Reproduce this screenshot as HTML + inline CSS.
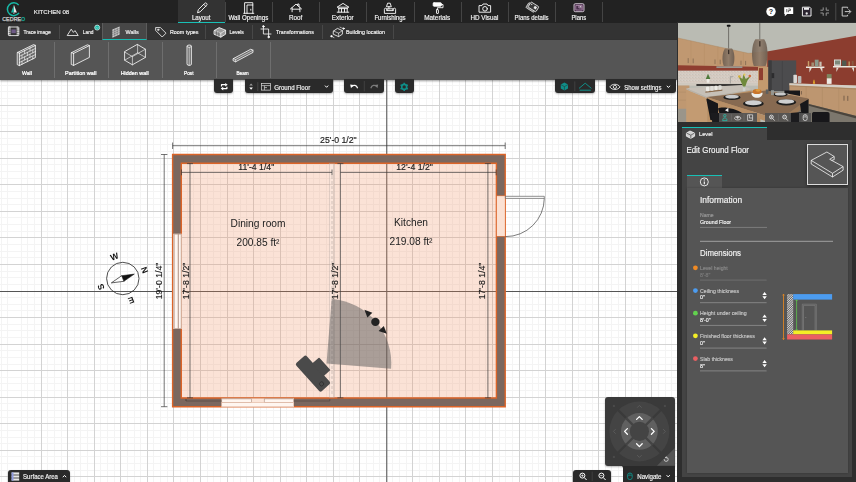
<!DOCTYPE html>
<html lang="en">
<head>
<meta charset="utf-8">
<title>Cedreo - KITCHEN 08</title>
<style>
*{box-sizing:border-box;margin:0;padding:0}
html,body{width:856px;height:482px;overflow:hidden;background:#fff}
body{font-family:"Liberation Sans",sans-serif;color:#fff;position:relative}
#canvas,#txt{position:absolute;left:0;top:0;width:856px;height:482px}
#txt{pointer-events:none;will-change:transform}
#canvas{will-change:transform}
.a{position:absolute}
.t{position:absolute;white-space:nowrap;line-height:1;display:block;-webkit-text-stroke:0.22px currentColor}
#topbar{position:absolute;left:0;top:0;width:856px;height:23px;background:#222}
#bar2{position:absolute;left:0;top:23px;width:677px;height:17px;background:#333}
#bar3{position:absolute;left:0;top:40px;width:677px;height:39.5px;background:#555;box-shadow:0 1px 2px rgba(0,0,0,.4)}
.sep{position:absolute;width:1px}
.fb{position:absolute;background:#2a2a2a;box-shadow:0 1px 2px rgba(0,0,0,.3)}
svg.i{position:absolute;overflow:visible}
#right{position:absolute;left:677.3px;top:22px;width:178.7px;height:460px;background:#2e2e2e}

</style>
</head>
<body>
<svg id="canvas" width="856" height="482" viewBox="0 0 856 482">
<rect width="856" height="482" fill="#fff"/>
<path d="M1.5 79V482M7.5 79V482M21.5 79V482M27.5 79V482M34.5 79V482M47.5 79V482M54.5 79V482M61.5 79V482M74.5 79V482M80.5 79V482M87.5 79V482M100.5 79V482M107.5 79V482M114.5 79V482M127.5 79V482M134.5 79V482M140.5 79V482M153.5 79V482M160.5 79V482M167.5 79V482M180.5 79V482M187.5 79V482M193.5 79V482M207.5 79V482M213.5 79V482M220.5 79V482M233.5 79V482M240.5 79V482M246.5 79V482M260.5 79V482M266.5 79V482M273.5 79V482M286.5 79V482M293.5 79V482M300.5 79V482M313.5 79V482M319.5 79V482M326.5 79V482M339.5 79V482M346.5 79V482M353.5 79V482M366.5 79V482M373.5 79V482M379.5 79V482M392.5 79V482M399.5 79V482M406.5 79V482M419.5 79V482M426.5 79V482M432.5 79V482M446.5 79V482M452.5 79V482M459.5 79V482M472.5 79V482M479.5 79V482M485.5 79V482M499.5 79V482M505.5 79V482M512.5 79V482M525.5 79V482M532.5 79V482M538.5 79V482M552.5 79V482M558.5 79V482M565.5 79V482M578.5 79V482M585.5 79V482M592.5 79V482M605.5 79V482M611.5 79V482M618.5 79V482M631.5 79V482M638.5 79V482M645.5 79V482M658.5 79V482M665.5 79V482M671.5 79V482M0 85.5H678M0 91.5H678M0 98.5H678M0 111.5H678M0 118.5H678M0 125.5H678M0 138.5H678M0 144.5H678M0 151.5H678M0 164.5H678M0 171.5H678M0 178.5H678M0 191.5H678M0 198.5H678M0 204.5H678M0 217.5H678M0 224.5H678M0 231.5H678M0 244.5H678M0 251.5H678M0 257.5H678M0 271.5H678M0 277.5H678M0 284.5H678M0 297.5H678M0 304.5H678M0 310.5H678M0 324.5H678M0 330.5H678M0 337.5H678M0 350.5H678M0 357.5H678M0 364.5H678M0 377.5H678M0 383.5H678M0 390.5H678M0 403.5H678M0 410.5H678M0 417.5H678M0 430.5H678M0 437.5H678M0 443.5H678M0 456.5H678M0 463.5H678M0 470.5H678" stroke="#f4f4f4" stroke-width="1" fill="none"/>
<path d="M41.5 79V482M67.5 79V482M94.5 79V482M120.5 79V482M147.5 79V482M173.5 79V482M200.5 79V482M227.5 79V482M253.5 79V482M280.5 79V482M306.5 79V482M333.5 79V482M359.5 79V482M386.5 79V482M412.5 79V482M439.5 79V482M465.5 79V482M492.5 79V482M519.5 79V482M545.5 79V482M572.5 79V482M598.5 79V482M625.5 79V482M651.5 79V482M0 105.5H678M0 131.5H678M0 158.5H678M0 184.5H678M0 211.5H678M0 237.5H678M0 264.5H678M0 291.5H678M0 317.5H678M0 344.5H678M0 370.5H678M0 397.5H678M0 423.5H678M0 450.5H678M0 476.5H678" stroke="#d3d3d3" stroke-width="1" fill="none"/>
<g id="plan" font-family="'Liberation Sans',sans-serif">
<!-- axes -->
<path d="M386.8 79V482M0 291.5H677" stroke="#555" stroke-width="1" fill="none"/>
<!-- room fill -->
<rect x="181.3" y="163.2" width="315.1" height="234.8" fill="#f08a5a" fill-opacity="0.25"/>
<!-- walls -->
<path fill-rule="evenodd" fill="#7b675e" stroke="#dc6428" stroke-width="1.4" d="M172.6 154.5H505.2V406.7H172.6ZM181.3 163.2V398H496.4V163.2Z"/>
<!-- hidden wall -->
<rect x="329.6" y="163.6" width="4.8" height="234" fill="#fff" fill-opacity="0.15" stroke="#b0a29c" stroke-width="0.35"/>
<path d="M332 176V396" stroke="#a59a95" stroke-width="0.5" stroke-dasharray="3 2" fill="none"/>
<!-- left window -->
<rect x="173.3" y="233.7" width="8.4" height="95.3" fill="#fbe6da"/>
<path d="M174.3 234.2H178.3V328.5H174.3ZM178.3 234.2H181.2V328.5H178.3Z" fill="#fff6f0" stroke="#9b7b6a" stroke-width="0.5"/>
<!-- right door -->
<rect x="496.6" y="195.8" width="8.6" height="40.5" fill="#fbe1d3" stroke="#dc6428" stroke-width="0.6"/>
<path d="M505.4 196.3H544.3V198.4H505.4Z" fill="#fff" stroke="#444" stroke-width="0.6"/>
<path d="M544.3 198.4A38.6 38.6 0 0 1 505.4 236.6" fill="none" stroke="#444" stroke-width="0.7"/>
<!-- bottom window -->
<rect x="221.5" y="398.4" width="72.5" height="8.8" fill="#fbe6da"/>
<rect x="221.8" y="398.9" width="29.6" height="3.6" fill="#fff6f0" stroke="#9b7b6a" stroke-width="0.5"/>
<rect x="264.2" y="398.9" width="29.4" height="3.6" fill="#fff6f0" stroke="#9b7b6a" stroke-width="0.5"/>
<rect x="221.8" y="402.5" width="71.9" height="4.3" fill="#fff6f0" stroke="#d9a58c" stroke-width="0.5"/>
<path d="M186 399V401H221.5M186 401V399.5M294 401H329.8V399" stroke="#4c403b" stroke-width="0.6" fill="none"/>
<!-- dimension lines -->
<g stroke="#3a3a3a" stroke-width="0.7" fill="none">
<path d="M172.6 145.7H505.2M172.6 142.5V149M505.2 142.5V149"/>
<path d="M164.2 154.5V406.7M161 154.5H167.4M161 406.7H167.4"/>
<path d="M181.5 172.4H332M181.5 169.5V175.3M332 169.5V175.3"/>
<path d="M340.4 172.4H496.2M496.2 169.5V175.3"/>
<path d="M190 163.4V398M187 163.6H193M187 397.8H193"/>
<path d="M340.4 163.4V398M337.4 163.6H343.4M337.4 397.8H343.4"/>
<path d="M487.9 163.4V398M484.9 163.6H490.9M484.9 397.8H490.9"/>
</g>
<g fill="#1a1a1a" stroke="#1a1a1a" stroke-width="0.15" font-size="8.7" text-anchor="middle">
<text x="338.4" y="143.4">25'-0 1/2"</text>
<text x="256.3" y="170">11'-4 1/4"</text>
<text x="414.6" y="170">12'-4 1/2"</text>
<text transform="translate(162.4 281) rotate(-90)">19'-0 1/4"</text>
<text transform="translate(188.5 281) rotate(-90)">17'-8 1/2"</text>
<text transform="translate(338.3 281) rotate(-90)">17'-8 1/2"</text>
<text transform="translate(485.3 281) rotate(-90)">17'-8 1/4"</text>
</g>
<g fill="#222" font-size="10.2" text-anchor="middle">
<text x="258" y="227">Dining room</text>
<text x="258" y="246">200.85 ft²</text>
<text x="411" y="226">Kitchen</text>
<text x="411" y="245.3">219.08 ft²</text>
</g>
<!-- camera view cone -->
<path d="M326.5 363.5L331.7 298.9A64.8 64.8 0 0 1 391.1 368.7Z" fill="#5a5a5a" fill-opacity="0.5"/>
<g fill="#222">
<circle cx="375.4" cy="321.9" r="4.2"/>
<path d="M364.4 309.8L372.4 312.8L367.4 317.4Z"/>
<path d="M386.8 333.8L383.8 326L378.6 331Z"/>
</g>
<g transform="translate(313 373.6) rotate(-42)">
<rect x="-7" y="-19" width="14" height="38" rx="2" fill="#4a4a4a"/>
<rect x="6" y="-8" width="9.4" height="17" rx="0.8" fill="#4a4a4a"/>
<circle cx="-0.5" cy="13.4" r="2.1" fill="none" stroke="#2a2a2a" stroke-width="0.7"/>
</g>
<!-- compass -->
<g transform="translate(122.8 278.5)">
<circle r="16.2" fill="none" stroke="#222" stroke-width="0.8"/>
<g transform="rotate(69)">
<path d="M0 -12.3L3 0H-3Z" fill="#111" stroke="#111" stroke-width="0.5"/>
<path d="M0 12.3L3 0H-3Z" fill="#fff" stroke="#111" stroke-width="0.6"/>
<g font-size="8.5" font-weight="bold" fill="#111" text-anchor="middle">
<text x="0" y="-20.5">N</text>
<text transform="rotate(90)" x="0" y="-20.5">E</text>
<text transform="rotate(180)" x="0" y="-20.5">S</text>
<text transform="rotate(270)" x="0" y="-20.5">W</text>
</g>
</g>
</g>
</g>

</svg>
<div id="topbar">
<svg class="i" style="left:0;top:-0.5px" width="30" height="23" viewBox="0 0 30 23">
<path d="M18.7 5.14A6.4 6.4 0 1 0 19.04 12.92" fill="none" stroke="#17b8a6" stroke-width="1.5"/>
<path d="M13.9 4.8L11 12.5H13.9Z" fill="#17b8a6"/>
<path d="M13.9 4.8L16.8 12.5H13.9Z" fill="#e8e8e8"/>
<path d="M13.9 12.5V14" stroke="#ddd" stroke-width="0.8"/>
<text x="2.2" y="21.2" font-family="'Liberation Sans',sans-serif" font-size="4.9" fill="#cfcfcf" stroke="#cfcfcf" stroke-width="0.25" textLength="19" lengthAdjust="spacingAndGlyphs">CEDRE</text>
<text x="21.3" y="21.2" font-family="'Liberation Sans',sans-serif" font-size="4.9" fill="#17b8a6" stroke="#17b8a6" stroke-width="0.25">O</text>
</svg>

<div class="a" style="left:178.0px;top:0;width:47.2px;height:23px;background:#333;border-bottom:1.6px solid #18c0b6"></div>
<div class="sep" style="left:224.7px;top:1.5px;height:20.5px;background:#444"></div>
<div class="sep" style="left:271.9px;top:1.5px;height:20.5px;background:#444"></div>
<div class="sep" style="left:319.1px;top:1.5px;height:20.5px;background:#444"></div>
<div class="sep" style="left:366.3px;top:1.5px;height:20.5px;background:#444"></div>
<div class="sep" style="left:413.5px;top:1.5px;height:20.5px;background:#444"></div>
<div class="sep" style="left:460.7px;top:1.5px;height:20.5px;background:#444"></div>
<div class="sep" style="left:507.9px;top:1.5px;height:20.5px;background:#444"></div>
<div class="sep" style="left:555.1px;top:1.5px;height:20.5px;background:#444"></div>
<div class="sep" style="left:602.3px;top:1.5px;height:20.5px;background:#444"></div>
<svg class="i" style="left:193.6px;top:0.1px" width="16" height="16" viewBox="-8 -8 16 16"><g fill="none" stroke="#fff" stroke-width="0.9" stroke-linecap="round" stroke-linejoin="round"><path d="M-4.4 4.4L-3.6 1.6L2.6 -4.6A1.3 1.3 0 0 1 4.6 -2.6L-1.6 3.6Z"/><path d="M1.7 -3.7L3.7 -1.7"/></g></svg>

<svg class="i" style="left:240.8px;top:0.1px" width="16" height="16" viewBox="-8 -8 16 16"><g fill="none" stroke="#fff" stroke-width="0.9" stroke-linecap="round" stroke-linejoin="round"><path d="M-4.4 5.3V-5.3H3.8V5.3"/><path d="M-2 5.3V-3H3.8"/><path d="M-5.3 5.3H4.8"/><path d="M1.8 1.2V2.2"/></g></svg>

<svg class="i" style="left:288.0px;top:0.1px" width="16" height="16" viewBox="-8 -8 16 16"><g fill="none" stroke="#fff" stroke-width="0.9" stroke-linecap="round" stroke-linejoin="round"><path d="M-5.6 1L0 -3.9L5.6 1"/><path d="M-3.9 -0.3V3.8M3.9 -0.3V3.8M-3.9 1.2H3.9"/><path d="M1.6 -2.6V-4H3V-1.4"/></g></svg>

<svg class="i" style="left:335.2px;top:0.1px" width="16" height="16" viewBox="-8 -8 16 16"><g fill="none" stroke="#fff" stroke-width="0.9" stroke-linecap="round" stroke-linejoin="round"><path d="M-5.6 -1L0 -4.6L5.6 -1Z"/><path d="M-4.6 0.6H4.6M-5.8 4.2H5.8M-4.2 0.8V4M-1.5 0.8V4M1.5 0.8V4M4.2 0.8V4"/></g></svg>

<svg class="i" style="left:382.4px;top:0.1px" width="16" height="16" viewBox="-8 -8 16 16"><g fill="none" stroke="#fff" stroke-width="0.9" stroke-linecap="round" stroke-linejoin="round"><path d="M-5.6 5V1.4A1.2 1.2 0 0 1 -3.2 1.4V2.6H3.2V1.4A1.2 1.2 0 0 1 5.6 1.4V5Z"/><path d="M-3.4 -1.6L-2.4 -4.8H0.2L1.2 -1.6ZM-1.1 -1.6V1"/><path d="M-3 2.6V0.8H3V2.6"/></g></svg>

<svg class="i" style="left:429.6px;top:0.1px" width="16" height="16" viewBox="-8 -8 16 16"><g fill="none" stroke="#fff" stroke-width="0.9" stroke-linecap="round" stroke-linejoin="round"><rect x="-4.8" y="-5.2" width="8.2" height="3.4" rx="0.8" fill="#fff"/><path d="M3.4 -3.5H5V-0.3H-0.6V1.6"/><rect x="-1.5" y="1.6" width="1.9" height="3.9" rx="0.5"/></g></svg>

<svg class="i" style="left:476.8px;top:0.1px" width="16" height="16" viewBox="-8 -8 16 16"><g fill="none" stroke="#fff" stroke-width="0.9" stroke-linecap="round" stroke-linejoin="round"><path d="M-5.6 -2.4H-3L-2 -4H2L3 -2.4H5.6V4.2H-5.6Z"/><circle cx="0" cy="0.8" r="2.3"/></g></svg>

<svg class="i" style="left:524.0px;top:0.1px" width="16" height="16" viewBox="-8 -8 16 16"><g transform="translate(0 -0.6) rotate(32)"><rect x="-5.2" y="-2.6" width="9.2" height="6" rx="0.8" fill="#777" stroke="#cfcfcf" stroke-width="0.8"/><rect x="-3.6" y="-4.2" width="9.2" height="6" rx="0.8" fill="#3a3a3a" stroke="#e6e6e6" stroke-width="0.8"/><path d="M1.6 -2.8H4.2V-0.2H1.6Z" fill="#eee"/><circle cx="-1.8" cy="-2.4" r="0.6" fill="#eee"/></g></svg>

<svg class="i" style="left:571.2px;top:0.1px" width="16" height="16" viewBox="-8 -8 16 16"><g transform="translate(0 -0.3)"><rect x="-5" y="-4" width="10" height="8" rx="1.2" fill="#47304a" stroke="#d9cdd9" stroke-width="0.9"/><path d="M-3.2 -2.2H3.2V2.3H-3.2ZM-0.2 -2.2V0.3H3.2" fill="none" stroke="#d4a6cf" stroke-width="0.6"/><path d="M0.6 -1.4H2.4V-0.4H0.6Z" fill="#fff"/></g></svg>

<svg class="i" style="left:760px;top:0" width="96" height="23" viewBox="760 0 96 23">
<circle cx="771" cy="11.6" r="4.7" fill="#fff"/>
<text x="771" y="14.1" font-family="'Liberation Sans',sans-serif" font-size="7.2" font-weight="bold" fill="#222" text-anchor="middle">?</text>
<path d="M784.2 7.2H793.2V14H787.2L784.8 16.2V14H784.2Z" fill="#fff"/>
<path d="M786.8 9V12.2M788.4 9H790.4V10.6H788.4V12.2" stroke="#222" stroke-width="0.7" fill="none"/>
<path d="M802.4 7.2H809.8L811 8.4V16H802.4Z" fill="#2b2430" stroke="#eee" stroke-width="1"/>
<path d="M804 7.6H809V9.8H804Z" fill="#eee"/><circle cx="806.7" cy="13.5" r="1.15" fill="#eee"/>
<path d="M820.4 10.2H823.2V7.4M829 10.2H826.2V7.4M820.4 13H823.2V15.8M829 13H826.2V15.8" fill="none" stroke="#959595" stroke-width="1"/>
<path d="M835.8 3V20.5" stroke="#555" stroke-width="0.8"/>
<path d="M847.6 8.4V7.2H842.2V16H847.6V14.8" fill="none" stroke="#c8c8c8" stroke-width="1"/>
<path d="M844.8 11.6H850.6M848.6 9.4L850.8 11.6L848.6 13.8" fill="none" stroke="#c8c8c8" stroke-width="1"/>
</svg>
</div>
<div id="bar2">
<div class="a" style="left:102.3px;top:0;width:44.9px;height:17px;background:#474747;border-left:0.8px solid #5c5c5c;border-right:0.8px solid #5c5c5c;border-bottom:1.2px solid #18c0b6"></div>
<div class="sep" style="left:58.8px;top:1.5px;height:14.5px;background:#484848"></div>
<div class="sep" style="left:205.2px;top:1.5px;height:14.5px;background:#484848"></div>
<div class="sep" style="left:252px;top:1.5px;height:14.5px;background:#484848"></div>
<div class="sep" style="left:322px;top:1.5px;height:14.5px;background:#484848"></div>
<div class="sep" style="left:392.5px;top:1.5px;height:14.5px;background:#484848"></div>
<svg class="i" style="left:0;top:0" width="677" height="17" viewBox="0 23 677 17">
<g fill="none" stroke="#fff" stroke-width="0.8" stroke-linejoin="round" stroke-linecap="round">
<rect x="8.4" y="27" width="10.4" height="8.6" rx="0.6"/><path d="M10 27V35.6M17.2 27V35.6M8.4 29H10M8.4 31.3H10M8.4 33.6H10M17.2 29H18.8M17.2 31.3H18.8M17.2 33.6H18.8" stroke-width="0.6"/>
<path d="M11.4 29.4H15.8V33.2H11.4Z" fill="#6e5a86" stroke="none"/>
<path d="M67.4 35.2L71.2 29.2L73.4 32.4L75 30.6L78 35.2Z"/>
<path d="M156 27.6H160.4L166 33.2L162.2 37L156 30.8Z"/><circle cx="158.2" cy="29.8" r="0.7"/>
<path d="M214.4 30.4L219.2 27.6L225.6 30.2V34.2L220.8 37.2L214.4 34.4Z" fill="#9c9c9c"/><path d="M214.4 30.4L220.8 33.2L225.6 30.2M220.8 33.2V37.2" stroke-width="0.6"/><path d="M216.6 31.4V35.4M218.8 32.4V36.4" stroke-width="0.5" stroke="#444"/>
<path d="M263.4 26.6V34H271M261 29H268.6V36.6"/><circle cx="263.4" cy="26.4" r="0.8" fill="#fff"/><circle cx="268.6" cy="37" r="0.8" fill="#fff"/>
<path d="M333.6 31L337.4 28.4L342.4 30.6V34.2L338.6 36.6L333.6 34.4Z"/><path d="M333.6 31L338.6 33.2L342.4 30.6M338.6 33.2V36.6" stroke-width="0.6"/><path d="M331.4 36.4L334 37.6M340 27.2L343.4 28.6" stroke-dasharray="1 1" stroke-width="0.6"/><circle cx="331.4" cy="36.2" r="0.7" fill="#fff"/><circle cx="343.6" cy="28.6" r="0.7" fill="#fff"/>
</g>
<g transform="translate(1 0)">
<path d="M111.4 29.6L118.6 26.4V34.6L111.4 37.8Z" fill="#cfcfcf"/>
<path d="M111.4 31.6L118.6 28.4M111.4 33.6L118.6 30.4M111.4 35.6L118.6 32.4M113.8 28.6V36.8M116.2 27.6V35.6" stroke="#555" stroke-width="0.5" fill="none"/>
</g>
<circle cx="97.2" cy="27.6" r="2.5" fill="#17b8a6" stroke="#e8f6f4" stroke-width="0.7"/>
<path d="M96 27.2L97.2 28.4L98.4 27.2" stroke="#fff" stroke-width="0.5" fill="none"/>
</svg>







</div>
<div id="bar3">
<div class="sep" style="left:53.5px;top:1.5px;height:36.5px;background:#6e6e6e"></div>
<div class="sep" style="left:107.5px;top:1.5px;height:36.5px;background:#6e6e6e"></div>
<div class="sep" style="left:161.5px;top:1.5px;height:36.5px;background:#6e6e6e"></div>
<div class="sep" style="left:215.5px;top:1.5px;height:36.5px;background:#6e6e6e"></div>
<div class="sep" style="left:269.5px;top:1.5px;height:36.5px;background:#6e6e6e"></div>
<svg class="i" style="left:0;top:0" width="280" height="40" viewBox="0 40 280 40">
<g fill="none" stroke="#fff" stroke-width="0.8" stroke-linejoin="round" stroke-linecap="round">
<!-- wall (bricks) -->
<path d="M17.6 52.4L33.6 44.6L35.4 45.4V57.6L19.4 65.6L17.6 64.8Z" fill="#6a6a6a"/>
<path d="M19.4 53.2L35.4 45.4M19.4 53.2V65.6M17.6 52.4L19.4 53.2"/>
<path d="M19.4 56.3L35.4 48.4M19.4 59.4L35.4 51.5M19.4 62.5L35.4 54.6M24.6 50.6V53.7M30 48V51.1M22 55V58.1M27.4 52.4V55.5M32.8 49.8V52.9M24.6 56.8V59.9M30 54.2V57.3M22 61.2V64.3M27.4 58.6V61.7M32.8 56V59.1" stroke-width="0.6"/>
<!-- partition wall -->
<path d="M71.6 52.6L87.4 44.8L89.4 45.6V57.4L73.6 65.4L71.6 64.6Z" fill="#5e5e5e"/>
<path d="M73.6 53.4L89.4 45.6M73.6 53.4V65.4M71.6 52.6L73.6 53.4"/>
<!-- hidden wall -->
<path d="M137.6 44.6L145.4 49.2V57.4L132.4 64.8L124.6 60.2V52Z"/>
<path d="M124.6 52L132.4 56.6L145.4 49.2M132.4 56.6V64.8M137.6 44.6V52.8L124.6 60.2M137.6 52.8L145.4 57.4" stroke-width="0.6"/>
<!-- post -->
<path d="M187 46.2A2.2 1.2 0 0 1 191.4 46.2V64.2A2.2 1.2 0 0 1 187 64.2Z" fill="#6a6a6a"/>
<path d="M187 46.2A2.2 1.2 0 0 0 191.4 46.2M189.2 47.4V65.2" stroke-width="0.6"/>
<!-- beam -->
<path d="M233.4 58.6L250.8 49.2L253 50.2V52.4L235.6 61.8L233.4 60.8Z" fill="#6a6a6a"/>
<path d="M233.4 58.6L235.6 59.6L253 50.2M235.6 59.6V61.8" stroke-width="0.6"/>
</g>
</svg>





</div>
<div class="fb" style="left:214.3px;top:79px;width:18.8px;height:13.5px;border-radius:0 0 3px 3px;"></div>
<div class="fb" style="left:244.6px;top:79px;width:88.4px;height:13.5px;border-radius:0 0 3px 3px;"></div>
<div class="fb" style="left:344.3px;top:79px;width:39.4px;height:13.5px;border-radius:0 0 3px 3px;"></div>
<div class="fb" style="left:395px;top:79px;width:19px;height:13.5px;border-radius:0 0 3px 3px;"></div>
<div class="fb" style="left:555px;top:79px;width:40px;height:13.5px;border-radius:0 0 3px 3px;"></div>
<div class="fb" style="left:606px;top:79px;width:70px;height:13.5px;border-radius:0 0 3px 3px;"></div>
<svg class="i" style="left:200px;top:76px" width="480" height="20" viewBox="200 76 480 20">
<g fill="none" stroke="#fff" stroke-width="1.2" stroke-linejoin="round">
<path d="M221.5 86.4V84.7H225.6M226.9 86.8V88.6H222.8"/>
</g>
<path d="M225.2 82.9L227.7 84.7L225.2 86.5ZM223.2 86.8L220.7 88.6L223.2 90.4Z" fill="#fff"/>
<path d="M249.3 85.5L251.1 83.4L252.9 85.5Z" fill="#9a9a9a"/><path d="M249.3 87.6L251.1 89.8L252.9 87.6Z" fill="#fff"/>
<path d="M257.8 82.2V91" stroke="#555" stroke-width="0.7"/>
<g fill="none" stroke="#ddd" stroke-width="0.7"><rect x="261.5" y="83.5" width="9" height="6.6"/><path d="M261.5 85.6H270.5M264.4 85.6V90.1M264.4 87.6H267"/></g>
<path d="M325 85.6L326.6 87.3L328.2 85.6" fill="none" stroke="#fff" stroke-width="1"/>
<!-- undo / redo -->
<path d="M364.3 81V91.4" stroke="#4a4a4a" stroke-width="0.7"/>
<path d="M351.6 86.6C353.6 84.6 356.6 85 357.6 88.2" fill="none" stroke="#fff" stroke-width="1.2"/>
<path d="M350.2 84.6L353.6 85L351 88.2Z" fill="#fff"/>
<path d="M376.8 86.6C374.8 84.6 371.8 85 370.8 88.2" fill="none" stroke="#7d7d7d" stroke-width="1.2"/>
<path d="M378.2 84.6L374.8 85L377.4 88.2Z" fill="#7d7d7d"/>
<!-- gear -->
<g transform="translate(404.2 86.9)">
<circle r="2.5" fill="none" stroke="#0f8e88" stroke-width="1.6"/>
<g stroke="#0f8e88" stroke-width="1.5"><path d="M0 -4.2V-2.6M0 4.2V2.6M-3.64 -2.1L-2.25 -1.3M3.64 2.1L2.25 1.3M-3.64 2.1L-2.25 1.3M3.64 -2.1L2.25 -1.3"/></g>
</g>
<!-- layers buttons -->
<path d="M560.8 84.6L564.4 82.6L568 84.6V88.6L564.4 90.6L560.8 88.6Z" fill="#0f8e88"/>
<path d="M560.8 84.6L564.4 86.6L568 84.6M564.4 86.6V90.6" stroke="#2a2a2a" stroke-width="0.5" fill="none"/>
<path d="M574.8 81.4V91.2" stroke="#4a4a4a" stroke-width="0.7"/>
<path d="M579 88.4L585.2 83.2L591.4 88.4M579.6 90.2H590.8" fill="none" stroke="#0f8e88" stroke-width="1"/>
<!-- eye -->
<path d="M609.8 86.9C612 83.4 617.8 83.4 620 86.9C617.8 90.4 612 90.4 609.8 86.9Z" fill="none" stroke="#fff" stroke-width="0.8"/>
<circle cx="614.9" cy="86.9" r="1.6" fill="none" stroke="#fff" stroke-width="0.8"/>
<path d="M666.8 85.8L668.4 87.5L670 85.8" fill="none" stroke="#fff" stroke-width="1"/>
</svg>


<div class="fb" style="left:8.1px;top:469.5px;width:62.4px;height:13px;border-radius:3px 3px 0 0;"></div>
<svg class="i" style="left:8px;top:468px" width="64" height="14" viewBox="8 468 64 14">
<g fill="#e6e6e6"><rect x="11.6" y="472.4" width="7.6" height="2.2"/><rect x="11.6" y="475.4" width="7.6" height="2.2"/><rect x="11.6" y="478.4" width="7.6" height="2.2"/></g>
<rect x="11.6" y="472.4" width="1.9" height="8.2" fill="#8f9be0"/>
<path d="M62.8 477.2L64.5 475.4L66.2 477.2" fill="none" stroke="#fff" stroke-width="1"/>
</svg>

<div class="fb" style="left:605px;top:396.5px;width:69.8px;height:69.3px;border-radius:3px 3px 0 3px;background:#3a3a3a;"></div>
<div class="fb" style="left:623px;top:465.6px;width:51.8px;height:16.4px;border-radius:0;box-shadow:none;"></div>
<div class="fb" style="left:573px;top:469.9px;width:38.4px;height:12.1px;border-radius:3px 3px 0 0;"></div>
<svg class="i" style="left:570px;top:394px" width="108" height="88" viewBox="570 394 108 88">
<path d="M620 465.6H623V468.6A3 3 0 0 0 620 465.6Z" fill="#2a2a2a"/>
<g transform="translate(639.4 431.4)">
<circle r="30" fill="#444"/>
<path d="M-21.5 -21.5L-7 -7M21.5 -21.5L7 -7M-21.5 21.5L-7 7M21.5 21.5L7 7" stroke="#3a3a3a" stroke-width="2.2"/>
<circle r="18.4" fill="#606060"/>
<path d="M-13.6 -13.6L13.6 13.6M13.6 -13.6L-13.6 13.6" stroke="#444" stroke-width="2.4"/>
<circle r="9.6" fill="#444"/>
<g fill="none" stroke="#fff" stroke-width="1.3" stroke-linecap="round" stroke-linejoin="round">
<path d="M-2.8 -12L0 -14.8L2.8 -12M-2.8 12.4L0 15.2L2.8 12.4M-12 -2.8L-14.8 0L-12 2.8M12 -2.8L14.8 0L12 2.8"/>
</g>
<g fill="none" stroke="#595959" stroke-width="1" stroke-linecap="round">
<path d="M-2 -24L0 -26L2 -24M-2 24L0 26L2 24M-24 -2L-26 0L-24 2M24 -2L26 0L24 2"/>
</g>
<g fill="#4a4a4a"><circle cx="-25.5" cy="-25.5" r="1.2"/><circle cx="-25.5" cy="25.5" r="1.2"/><circle cx="25.5" cy="-25.5" r="1.2"/></g>
</g>
<path d="M674.8 448V465.8H657Z" fill="#555"/>
<path d="M664.2 459.2A2 2 0 1 0 666.4 457.4" fill="none" stroke="#ddd" stroke-width="0.8"/>
<path d="M666.6 456.2V458.6L664.8 457.4Z" fill="#ddd"/>
<!-- zoom buttons -->
<g fill="none" stroke="#fff" stroke-width="1"><circle cx="582.4" cy="475.6" r="2.5"/><path d="M584.3 477.6L586.6 480"/><circle cx="601.4" cy="475.6" r="2.5"/><path d="M603.3 477.6L605.6 480"/></g>
<path d="M581.2 475.6H583.6M582.4 474.4V476.8M600.2 475.6H602.6" stroke="#fff" stroke-width="0.7"/>
<path d="M592.2 471.6V481" stroke="#4a4a4a" stroke-width="0.7"/>
<!-- navigate -->
<rect x="627.6" y="473" width="4.6" height="6.6" rx="2.2" fill="none" stroke="#0f8e88" stroke-width="0.9"/>
<path d="M627.6 475.4H632.2M629.9 473V475.4" stroke="#0f8e88" stroke-width="0.6"/>
<path d="M666.6 475.2L668.2 476.9L669.8 475.2" fill="none" stroke="#fff" stroke-width="1"/>
</svg>

<div id="right"></div>
<svg class="i" style="left:677.6px;top:22.9px" width="178.4" height="98.9" viewBox="677.6 22.9 178.4 98.9" preserveAspectRatio="none">
<defs>
<linearGradient id="lampg" x1="0" x2="1" y1="0" y2="0"><stop offset="0" stop-color="#6e5e50"/><stop offset="0.5" stop-color="#8d7a69"/><stop offset="1" stop-color="#6a5b4f"/></linearGradient>
<pattern id="terr" width="3" height="3" patternUnits="userSpaceOnUse"><rect width="3" height="3" fill="#dcd5cc"/><rect x="0.4" y="0.5" width="0.9" height="0.8" fill="#8b6a58"/><rect x="1.8" y="1.8" width="0.8" height="0.8" fill="#5f5a55"/><rect x="2" y="0.2" width="0.6" height="0.6" fill="#b9a089"/></pattern>
<clipPath id="pv"><rect x="677.6" y="22.9" width="178.4" height="98.9"/></clipPath>
</defs>
<g clip-path="url(#pv)">
<!-- ceiling -->
<rect x="677" y="22" width="180" height="100" fill="#babbb3"/>
<!-- red side wall -->
<path d="M766.6 51.4L856 35.6V90H766.6Z" fill="#8c3d2f"/>
<!-- back wall / upper cabinets -->
<path d="M677 37.8L748 53.2L766.8 51.4V67H677Z" fill="#c09871"/>
<path d="M677 37.8L748 53.2L766.8 51.4" fill="none" stroke="#a88561" stroke-width="0.4"/>
<path d="M690.6 40.8V65.4M704 43.8V65.6M717.4 46.6V65.8M730.4 49.4V66M743 52.2V66.4M755 52.4V66.6" stroke="#b18a60" stroke-width="0.35"/>
<path d="M687.8 58V63M692.8 58.4V63.2M714.6 59.4V64M719.8 59.6V64.2M740.6 60.6V64.8M745.2 60.8V65" stroke="#5b4a3c" stroke-width="0.5"/>
<!-- red strip under cabinets -->
<path d="M677 65.1L766.6 66.8V71H677Z" fill="#8f3e30"/>
<rect x="758.4" y="66.8" width="8.4" height="14" fill="#8f3e30"/>
<!-- backsplash -->
<rect x="677" y="70.6" width="81.4" height="12.8" fill="url(#terr)"/>
<rect x="677" y="70.6" width="81.4" height="12.8" fill="#e2dad0" fill-opacity="0.35"/>
<!-- range hood -->
<path d="M716 66.2H742V68H716Z" fill="#9b9890"/>
<!-- back counter -->
<rect x="677" y="83" width="84" height="2.6" fill="#cfc9bf"/>
<path d="M696 83.8H742V85.8H696Z" fill="#3a3836"/>
<path d="M730 76.4V83.4M730 76.6H733" stroke="#8a8a88" stroke-width="0.6" fill="none"/>
<!-- tall cabinet next to fridge -->
<rect x="757.6" y="66.8" width="11" height="26" fill="#c39a6e"/>
<rect x="758.6" y="68" width="4" height="12" fill="#8f3e30"/>
<!-- lower back cabinets left -->
<rect x="677" y="85.4" width="12" height="24" fill="#bf9871"/>
<path d="M677 92H686M677 100H686" stroke="#a98560" stroke-width="0.4"/>
<!-- floor -->
<path d="M677 108.6H690V122.5H677Z" fill="#9a958a"/>
<path d="M790 96L856 112V122.5H780Z" fill="#7c776d"/>
<!-- fridge -->
<rect x="768" y="60.3" width="27.8" height="31" fill="#4c4c4e"/>
<rect x="768" y="60.3" width="3.4" height="31" fill="#3c3c3e"/>
<path d="M782 61V91" stroke="#3a3a3c" stroke-width="0.4"/>
<rect x="771.2" y="73" width="2.6" height="5" fill="#2c2c2e"/>
<!-- right lower cabinets -->
<path d="M789 83.2L856 85.4V116L808.4 104L789 97Z" fill="#bd9670"/>
<path d="M789 83.2L856 85.4V88.2L789 85.2Z" fill="#d4cfc6"/>
<path d="M789 85.4L856 88.4V89.4L789 86.2Z" fill="#a88560"/>
<path d="M805.8 86.4V102.6M822 87.2V107M838.4 88V111.2" stroke="#a98560" stroke-width="0.4"/>
<path d="M808.4 104L856 116V118.4L808.4 105.6Z" fill="#4a443c"/>
<path d="M843.6 95.6V100.6M847.4 95.8V100.8M801 91V94.4" stroke="#4b3d32" stroke-width="0.6"/>
<!-- items on right counter -->
<rect x="793" y="74.6" width="3.6" height="8.4" rx="0.8" fill="#d9d9d6"/><rect x="797.4" y="75.8" width="3.6" height="7.4" rx="0.8" fill="#b9b9b6"/>
<path d="M812.4 83.6L813.2 79.6H814L814.8 83.6Z" fill="#e0a52c"/>
<rect x="826.4" y="74" width="4.8" height="4.4" fill="#7f8660"/><rect x="826.4" y="78.2" width="4.8" height="5.6" fill="#ece9e2"/>
<!-- shelves -->
<path d="M805.6 66.4H824V67.9H805.6ZM832.6 65.8H856V67.3H832.6Z" fill="#ece8e0"/>
<path d="M809 67.9V72.4L811.4 67.9ZM822 67.9V72.4L819.6 67.9ZM836 67.3V72L838.4 67.3ZM853.6 67.3V72L851.2 67.3Z" fill="#ded9d0"/>
<rect x="807.4" y="61" width="1.4" height="5.4" fill="#c7a06a"/><rect x="811" y="62.4" width="2.6" height="4" fill="#a38e74"/><rect x="814.4" y="59.6" width="3.8" height="6.8" fill="#8c9a8c"/><rect x="819" y="61.6" width="2.2" height="4.8" fill="#c9c2b4"/>
<rect x="833.6" y="59.4" width="7" height="6.4" fill="#d8d8d4"/><rect x="834.6" y="60.4" width="5" height="4" fill="#7d8a7c"/><rect x="841.6" y="60.4" width="4.4" height="5.4" fill="#4f5a50"/><rect x="848" y="61.4" width="1.6" height="4.4" fill="#b7905c"/><rect x="851.4" y="60.8" width="1.8" height="5" fill="#8a5a42"/>
<!-- island -->
<path d="M685.8 89.4L706.7 98V123H685.8Z" fill="#c39b72"/>
<path d="M685.8 88.2L741.4 84.9L751.4 89.3L706.7 96.8Z" fill="#c6c0b7"/>
<path d="M685.8 88.2L706.7 96.8L751.4 89.3V90.5L706.7 98.2L685.8 89.5Z" fill="#b9b2a8"/>
<path d="M706.7 98.2L751.4 90.5V123H706.7Z" fill="#b98f64"/>
<!-- cups on island -->
<path d="M705 91.4L722 89.4V90.6L705 92.6Z" fill="#8a6a4c"/>
<rect x="705.6" y="86.6" width="3.4" height="4.6" rx="1" fill="#ecebe6"/><rect x="709.8" y="86" width="3.4" height="4.6" rx="1" fill="#e0dfda"/><rect x="714" y="85.6" width="3.2" height="4.4" rx="1" fill="#ecebe6"/><rect x="718" y="85.2" width="3.2" height="4.4" rx="1" fill="#dddcd6"/>
<!-- plant -->
<rect x="706.4" y="78.6" width="2.6" height="4" fill="#eeece6"/><path d="M705.4 78.8L707.6 73.6L710 78.8Z" fill="#4e7a3a"/>
<!-- flowers -->
<path d="M743.4 88L738 76L742 79L743 74L745.4 79L750.6 75.4L746.8 81L744.4 88Z" fill="#6f8a3c"/>
<circle cx="739" cy="76.4" r="1.3" fill="#d8b13a"/><circle cx="749.4" cy="76" r="1.3" fill="#d06a3a"/><circle cx="744" cy="74.6" r="1.1" fill="#e4c85a"/>
<rect x="742.4" y="86.4" width="2.6" height="4.6" fill="#cfd6d4" fill-opacity="0.8"/>
<!-- table -->
<path d="M706.3 96.9L765.9 90.4L808.2 98.3L779 119.8Z" fill="#876a51"/>
<path d="M706.3 96.9L779 119.8V123H771L706.3 100.4Z" fill="#b68e66"/>
<path d="M779 119.8L808.2 98.3V102L786 123H779Z" fill="#9d7a58"/>
<path d="M717 104.4L760 118.4V123H717Z" fill="#b38b62"/>
<!-- plates -->
<g>
<ellipse cx="731.6" cy="97.3" rx="8.6" ry="2.6" fill="#1f1f1f"/><ellipse cx="731.6" cy="96.6" rx="6.8" ry="1.9" fill="#c9cacb"/>
<ellipse cx="753" cy="103.6" rx="10.4" ry="3.3" fill="#1f1f1f"/><ellipse cx="753" cy="102.7" rx="8.4" ry="2.5" fill="#cfd0d1"/>
<ellipse cx="780" cy="94.5" rx="7.2" ry="2.1" fill="#1f1f1f"/><ellipse cx="780" cy="93.9" rx="5.6" ry="1.5" fill="#c9cacb"/>
<ellipse cx="785.8" cy="102.2" rx="10" ry="3.1" fill="#1f1f1f"/><ellipse cx="785.8" cy="101.4" rx="8" ry="2.3" fill="#cfd0d1"/>
</g>
<!-- bowl -->
<path d="M751 92.6H762.2C762.2 96 760 97.6 756.6 97.6C753.2 97.6 751 96 751 92.6Z" fill="#eeeeea"/>
<ellipse cx="756.6" cy="91.4" rx="4.6" ry="2.6" fill="#c9762c"/>
<ellipse cx="757.6" cy="90.2" rx="2.4" ry="1.4" fill="#e09a3c"/>
<!-- glasses -->
<rect x="765.4" y="89.4" width="2.6" height="4.4" fill="#5d5f5e"/><rect x="770.6" y="90" width="3" height="5" fill="#9aa09e" fill-opacity="0.8"/>
<!-- chairs -->
<path d="M706 99.4C706 98.4 707 98.2 708 98.8L717.6 103.4V120H710Z" fill="#17171a"/>
<path d="M717.6 108.4C722 106 736 108.6 742.4 113.4H719Z" fill="#17171a"/>
<path d="M710 113H722V123H712Z" fill="#1b1b1e"/>
<path d="M784 90.4H799.6V95.8L792 94.4L784 93Z" fill="#17171a"/>
<path d="M799.6 104L808.2 99V113.6L801 114Z" fill="#17171a"/>
<path d="M790 113L801 112V123H788Z" fill="#1b1b1e"/>
<path d="M811.6 113.6C811.6 112.6 812.6 112 814 112H827C828.4 112 829.2 112.8 829.2 114V123H811.6Z" fill="#17171a"/>
<path d="M724.6 110.2L728 107.6V112Z" fill="#f1f1f1"/>
<!-- pendant lamps -->
<path d="M728.2 26.6V48.6M759.4 23V39.6" stroke="#26221f" stroke-width="0.5"/>
<rect x="726.4" y="24.6" width="3.8" height="2.1" rx="0.8" fill="#111"/>
<path d="M724.6 48.4H731.6C734.4 52 734.8 61 732.6 65.8H723.4C721.2 61 721.8 52 724.6 48.4Z" fill="url(#lampg)" fill-opacity="0.93"/>
<path d="M755 39.2H763.8C767.6 44 768.2 58 765.2 65.8H753.4C750.4 58 751.2 44 755 39.2Z" fill="url(#lampg)" fill-opacity="0.9"/>
<rect x="727.6" y="49.6" width="1.3" height="4.4" fill="#3a2f28"/><rect x="758.8" y="41" width="1.3" height="5.4" fill="#3a2f28"/>
</g>
</svg>
<div class="a" style="left:718.6px;top:113.3px;width:38.4px;height:8.5px;background:rgba(82,82,82,.92)"></div>
<div class="a" style="left:765.3px;top:113.3px;width:26.2px;height:8.5px;background:rgba(82,82,82,.92)"></div>
<div class="a" style="left:799px;top:113.3px;width:12.4px;height:8.5px;background:rgba(82,82,82,.92)"></div>
<svg class="i" style="left:715px;top:112px" width="100" height="11" viewBox="715 112 100 11">
<g fill="none" stroke-width="0.7">
<circle cx="724.8" cy="115.6" r="1.2" stroke="#1fc4b0"/><path d="M722.6 120.6C722.6 117 727 117 727 120.6Z" stroke="#1fc4b0"/>
<path d="M731.4 114.2V120.8M744 114.2V120.8M778.4 114.2V120.8" stroke="#777" stroke-width="0.5"/>
<path d="M734.6 118.4C734.6 115.6 740.8 115.6 740.8 118.4C740.8 120.4 734.6 120.4 734.6 118.4ZM736 117.4H739.4M737.7 116V119" stroke="#e6e6e6"/>
<path d="M747.6 114.8H752.6V120.4H747.6ZM749.4 114.8V118H752.6" stroke="#e6e6e6"/>
<circle cx="771.4" cy="117" r="1.9" stroke="#fff"/><path d="M772.8 118.6L774.6 120.6" stroke="#fff"/><path d="M770.4 117H772.4M771.4 116V118" stroke="#fff" stroke-width="0.5"/>
<circle cx="784.6" cy="117" r="1.9" stroke="#fff"/><path d="M786 118.6L787.8 120.6" stroke="#fff"/><path d="M783.6 117H785.6" stroke="#fff" stroke-width="0.5"/>
<rect x="803.2" y="114.6" width="4" height="6" rx="2" stroke="#e6e6e6"/><path d="M803.2 117H807.2M805.2 114.6V117" stroke="#e6e6e6" stroke-width="0.5"/>
</g>
</svg>
<div class="a" style="left:682px;top:127.2px;width:85px;height:13.3px;background:#444;border-top:1.3px solid #18c0b6"></div>
<div class="a" style="left:682px;top:140px;width:170px;height:337px;background:#444"></div>
<div class="a" style="left:686.5px;top:175px;width:35.6px;height:13.2px;background:#555;border-top:1.3px solid #18c0b6"></div>
<div class="a" style="left:686.5px;top:187.8px;width:161px;height:285.2px;background:#555;box-shadow:0 0 2px rgba(0,0,0,.25)"></div>
<div class="a" style="left:806.8px;top:143.8px;width:40.8px;height:41.4px;background:#555;border:0.9px solid #dcdcdc;box-shadow:0 1px 3px rgba(0,0,0,.5)"></div>
<svg class="i" style="left:682px;top:126px" width="170" height="350" viewBox="682 126 170 350">
<g fill="none" stroke="#fff" stroke-width="0.75" stroke-linejoin="round">
<path d="M811.2 160.4L826.9 152L834.2 156.5L829.7 159.3L843.1 166.6L832.5 173.3Z"/>
<path d="M811.2 160.4V164L832.5 177V173.3M832.5 177L843.1 170.2V166.6M834.2 156.5V159.6L831.6 160.4"/>
</g>
<!-- level tab icon -->
<g fill="none" stroke="#fff" stroke-width="0.7" stroke-linejoin="round">
<path d="M686.4 133L690 131L694.6 133V136.2L690.8 138.4L686.4 136.2Z" fill="#cfcfcf"/>
<path d="M686.4 133L690.8 135.2L694.6 133M690.8 135.2V138.4" stroke="#444"/>
</g>
<!-- info icon -->
<circle cx="704.3" cy="181.9" r="4" fill="none" stroke="#f4f4f4" stroke-width="0.9"/>
<path d="M704.3 181.5V184.2" stroke="#fff" stroke-width="1.1"/><circle cx="704.3" cy="179.9" r="0.65" fill="#fff"/>
<!-- rules -->
<path d="M700 227.4H767" stroke="#8e8e8e" stroke-width="0.7"/>
<path d="M700 241.3H833" stroke="#a9a9a9" stroke-width="0.9"/>
<path d="M700 280.1H766.6" stroke="#7a7a7a" stroke-width="0.7"/>
<path d="M700 302.7H766.6M700 325.4H766.6M700 348.1H766.6M700 370.9H766.6" stroke="#9a9a9a" stroke-width="0.7"/>
<!-- dots -->
<circle cx="695.4" cy="267.8" r="2.4" fill="#f08a24"/>
<circle cx="695.4" cy="290.6" r="2.4" fill="#4c9cf0"/>
<circle cx="695.4" cy="313.2" r="2.4" fill="#62d24e"/>
<circle cx="695.4" cy="335.8" r="2.4" fill="#f4ee26"/>
<circle cx="695.4" cy="358.6" r="2.4" fill="#ea5f62"/>
<!-- spinners -->
<g fill="#fff">
<path d="M762.4 294.9L764.6 291.9L766.8 294.9ZM762.4 296.2L764.6 299.2L766.8 296.2Z"/>
<path d="M762.4 317.6L764.6 314.6L766.8 317.6ZM762.4 318.9L764.6 321.9L766.8 318.9Z"/>
<path d="M762.4 340.3L764.6 337.3L766.8 340.3ZM762.4 341.6L764.6 344.6L766.8 341.6Z"/>
<path d="M762.4 363L764.6 360L766.8 363ZM762.4 364.3L764.6 367.3L766.8 364.3Z"/>
</g>
<!-- diagram -->
<defs><pattern id="hat" width="1.6" height="1.6" patternUnits="userSpaceOnUse" patternTransform="rotate(45)"><rect width="1.6" height="1.6" fill="#d6d6d6"/><rect width="0.7" height="1.6" fill="#555"/></pattern></defs>
<path d="M783.5 294.2V339.6M782.5 295.4L783.5 294.2L784.5 295.4M782.5 338.4L783.5 339.6L784.5 338.4" stroke="#ec8a1e" stroke-width="0.8" fill="none"/>
<rect x="787.1" y="294.1" width="6.1" height="40.3" fill="url(#hat)"/>
<rect x="793.2" y="294.1" width="38.9" height="5.5" fill="#4c9cf0"/>
<path d="M796.6 299.8V330.4M795.8 300.8L796.6 299.8L797.4 300.8M795.8 329.4L796.6 330.4L797.4 329.4" stroke="#62d24e" stroke-width="0.7" fill="none"/>
<path d="M802.3 330.4V304.2H816.3V330.4M803.5 330.4V305.4H815.1V330.4" stroke="#858585" stroke-width="0.6" fill="none"/>
<circle cx="805.8" cy="317.6" r="0.5" fill="#858585"/>
<rect x="793.2" y="330.4" width="38.9" height="4" fill="#f4ee26"/>
<rect x="787.1" y="334.4" width="45" height="5.1" fill="#ea5f62"/>
</svg>
















<svg id="txt" width="856" height="482" viewBox="0 0 856 482" font-family="'Liberation Sans',sans-serif">
<text x="33.80" y="14.02" font-size="5.90" fill="#ececec" stroke="#ececec" stroke-width="0.16" textLength="35.40" lengthAdjust="spacingAndGlyphs">KITCHEN 08</text>
<text x="191.95" y="20.02" font-size="6.30" fill="#f4f4f4" stroke="#f4f4f4" stroke-width="0.16" textLength="18.50" lengthAdjust="spacingAndGlyphs">Layout</text>
<text x="228.50" y="20.02" font-size="6.30" fill="#f4f4f4" stroke="#f4f4f4" stroke-width="0.16" textLength="39.80" lengthAdjust="spacingAndGlyphs">Wall Openings</text>
<text x="288.90" y="20.02" font-size="6.30" fill="#f4f4f4" stroke="#f4f4f4" stroke-width="0.16" textLength="13.40" lengthAdjust="spacingAndGlyphs">Roof</text>
<text x="331.85" y="20.02" font-size="6.30" fill="#f4f4f4" stroke="#f4f4f4" stroke-width="0.16" textLength="21.90" lengthAdjust="spacingAndGlyphs">Exterior</text>
<text x="374.40" y="20.02" font-size="6.30" fill="#f4f4f4" stroke="#f4f4f4" stroke-width="0.16" textLength="31.20" lengthAdjust="spacingAndGlyphs">Furnishings</text>
<text x="424.15" y="20.02" font-size="6.30" fill="#f4f4f4" stroke="#f4f4f4" stroke-width="0.16" textLength="26.10" lengthAdjust="spacingAndGlyphs">Materials</text>
<text x="470.50" y="20.02" font-size="6.30" fill="#f4f4f4" stroke="#f4f4f4" stroke-width="0.16" textLength="27.80" lengthAdjust="spacingAndGlyphs">HD Visual</text>
<text x="514.60" y="20.02" font-size="6.30" fill="#f4f4f4" stroke="#f4f4f4" stroke-width="0.16" textLength="34.00" lengthAdjust="spacingAndGlyphs">Plans details</text>
<text x="571.40" y="20.02" font-size="6.30" fill="#f4f4f4" stroke="#f4f4f4" stroke-width="0.16" textLength="14.80" lengthAdjust="spacingAndGlyphs">Plans</text>
<text x="23.40" y="34.02" font-size="5.40" fill="#f4f4f4" stroke="#f4f4f4" stroke-width="0.16" textLength="27.40" lengthAdjust="spacingAndGlyphs">Trace image</text>
<text x="82.80" y="34.02" font-size="5.40" fill="#f4f4f4" stroke="#f4f4f4" stroke-width="0.16" textLength="10.70" lengthAdjust="spacingAndGlyphs">Land</text>
<text x="125.60" y="34.02" font-size="5.40" fill="#f4f4f4" stroke="#f4f4f4" stroke-width="0.16" textLength="13.10" lengthAdjust="spacingAndGlyphs">Walls</text>
<text x="170.00" y="34.02" font-size="5.40" fill="#f4f4f4" stroke="#f4f4f4" stroke-width="0.16" textLength="28.50" lengthAdjust="spacingAndGlyphs">Room types</text>
<text x="229.40" y="34.02" font-size="5.40" fill="#f4f4f4" stroke="#f4f4f4" stroke-width="0.16" textLength="14.40" lengthAdjust="spacingAndGlyphs">Levels</text>
<text x="276.00" y="34.02" font-size="5.40" fill="#f4f4f4" stroke="#f4f4f4" stroke-width="0.16" textLength="37.90" lengthAdjust="spacingAndGlyphs">Transformations</text>
<text x="346.00" y="34.02" font-size="5.40" fill="#f4f4f4" stroke="#f4f4f4" stroke-width="0.16" textLength="39.00" lengthAdjust="spacingAndGlyphs">Building location</text>
<text x="21.95" y="75.02" font-size="5.40" fill="#fff" stroke="#fff" stroke-width="0.24" textLength="9.90" lengthAdjust="spacingAndGlyphs">Wall</text>
<text x="65.00" y="75.02" font-size="5.40" fill="#fff" stroke="#fff" stroke-width="0.24" textLength="31.40" lengthAdjust="spacingAndGlyphs">Partition wall</text>
<text x="120.70" y="75.02" font-size="5.40" fill="#fff" stroke="#fff" stroke-width="0.24" textLength="28.00" lengthAdjust="spacingAndGlyphs">Hidden wall</text>
<text x="184.00" y="75.02" font-size="5.40" fill="#fff" stroke="#fff" stroke-width="0.24" textLength="9.60" lengthAdjust="spacingAndGlyphs">Post</text>
<text x="236.50" y="75.02" font-size="5.40" fill="#fff" stroke="#fff" stroke-width="0.24" textLength="12.20" lengthAdjust="spacingAndGlyphs">Beam</text>
<text x="699.00" y="136.02" font-size="5.60" fill="#f4f4f4" stroke="#f4f4f4" stroke-width="0.16" textLength="13.60" lengthAdjust="spacingAndGlyphs">Level</text>
<text x="686.40" y="153.02" font-size="8.40" fill="#f4f4f4" stroke="#f4f4f4" stroke-width="0.16" textLength="62.60" lengthAdjust="spacingAndGlyphs">Edit Ground Floor</text>
<text x="700.00" y="203.02" font-size="8.40" fill="#f4f4f4" stroke="#f4f4f4" stroke-width="0.16" textLength="42.10" lengthAdjust="spacingAndGlyphs">Information</text>
<text x="700.00" y="256.02" font-size="8.40" fill="#f4f4f4" stroke="#f4f4f4" stroke-width="0.16" textLength="41.00" lengthAdjust="spacingAndGlyphs">Dimensions</text>
<text x="700.00" y="217.02" font-size="5.40" fill="#9a9a9a" stroke="#9a9a9a" stroke-width="0.16" textLength="13.70" lengthAdjust="spacingAndGlyphs">Name</text>
<text x="700.00" y="224.02" font-size="5.40" fill="#f4f4f4" stroke="#f4f4f4" stroke-width="0.16" textLength="31.10" lengthAdjust="spacingAndGlyphs">Ground Floor</text>
<text x="700.10" y="270.02" font-size="5.40" fill="#8a8a8a" stroke="#8a8a8a" stroke-width="0.16" textLength="27.70" lengthAdjust="spacingAndGlyphs">Level height</text>
<text x="700.00" y="277.02" font-size="5.20" fill="#7c7c7c" stroke="#7c7c7c" stroke-width="0.16">8'-8&quot;</text>
<text x="700.00" y="293.02" font-size="5.40" fill="#c6c6c6" stroke="#c6c6c6" stroke-width="0.16" textLength="39.00" lengthAdjust="spacingAndGlyphs">Ceiling thickness</text>
<text x="700.00" y="299.02" font-size="5.30" fill="#f4f4f4" stroke="#f4f4f4" stroke-width="0.16">0&quot;</text>
<text x="700.00" y="315.02" font-size="5.40" fill="#c6c6c6" stroke="#c6c6c6" stroke-width="0.16" textLength="46.70" lengthAdjust="spacingAndGlyphs">Height under ceiling</text>
<text x="700.00" y="322.02" font-size="5.30" fill="#f4f4f4" stroke="#f4f4f4" stroke-width="0.16">8'-0&quot;</text>
<text x="700.00" y="338.02" font-size="5.40" fill="#c6c6c6" stroke="#c6c6c6" stroke-width="0.16" textLength="54.80" lengthAdjust="spacingAndGlyphs">Finished floor thickness</text>
<text x="700.00" y="345.02" font-size="5.30" fill="#f4f4f4" stroke="#f4f4f4" stroke-width="0.16">0&quot;</text>
<text x="700.00" y="361.02" font-size="5.40" fill="#c6c6c6" stroke="#c6c6c6" stroke-width="0.16" textLength="32.90" lengthAdjust="spacingAndGlyphs">Slab thickness</text>
<text x="700.00" y="368.02" font-size="5.30" fill="#f4f4f4" stroke="#f4f4f4" stroke-width="0.16">8&quot;</text>
<text x="274.20" y="90.02" font-size="6.30" fill="#f4f4f4" stroke="#f4f4f4" stroke-width="0.16" textLength="36.00" lengthAdjust="spacingAndGlyphs">Ground Floor</text>
<text x="624.20" y="90.02" font-size="6.30" fill="#f4f4f4" stroke="#f4f4f4" stroke-width="0.16" textLength="37.20" lengthAdjust="spacingAndGlyphs">Show settings</text>
<text x="23.10" y="479.02" font-size="6.30" fill="#f4f4f4" stroke="#f4f4f4" stroke-width="0.16" textLength="34.80" lengthAdjust="spacingAndGlyphs">Surface Area</text>
<text x="637.20" y="479.02" font-size="6.30" fill="#f4f4f4" stroke="#f4f4f4" stroke-width="0.16" textLength="24.30" lengthAdjust="spacingAndGlyphs">Navigate</text>
</svg>
</body>
</html>
